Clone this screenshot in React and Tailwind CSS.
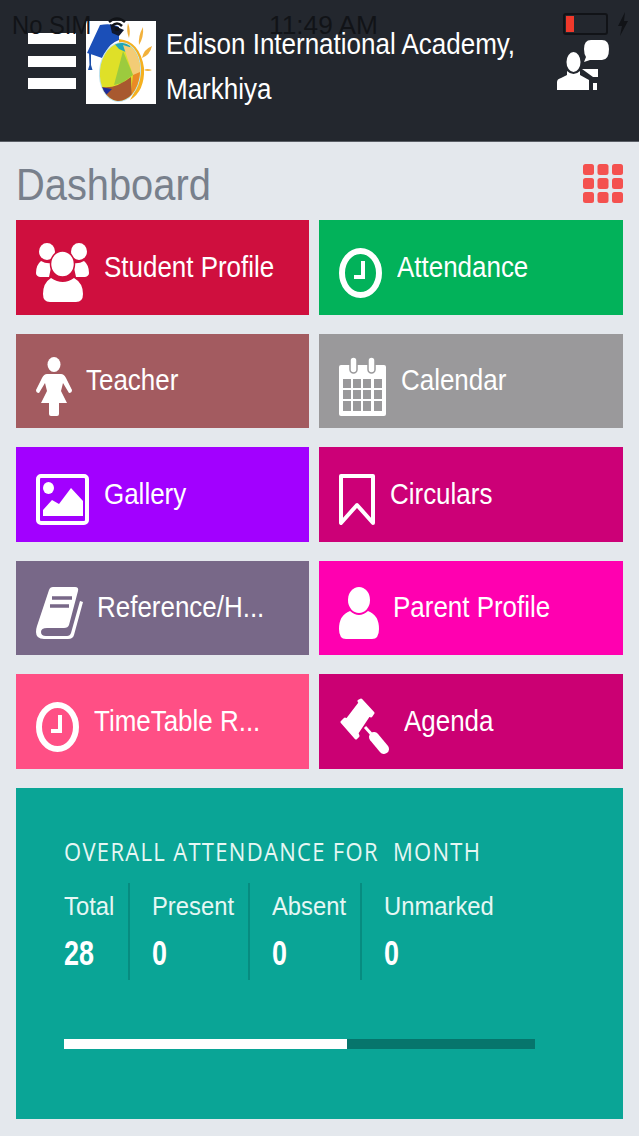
import React from 'react';

const UserGroupIcon = () => (
    <svg width="53" height="59" viewBox="0 0 53 59" fill="white">
        <ellipse cx="11" cy="8.5" rx="8" ry="8.5" />
        <ellipse cx="43" cy="8.5" rx="8" ry="8.5" />
        <path d="M5 18 Q0 22 0 30 Q0 33 4 34 H13 L16 20 Q10 21 5 18 Z" />
        <path d="M48 18 Q53 22 53 30 Q53 33 49 34 H40 L37 20 Q43 21 48 18 Z" />
        <ellipse cx="26.5" cy="21" rx="12" ry="13" stroke="#cf0f3e" strokeWidth="1.5" />
        <path d="M15 35 Q7 40 7 51 Q7 59 14 59 H40 Q47 59 47 51 Q47 40 38 35 Q27 43 15 35 Z" />
    </svg>
);

const ClockIcon = ({ stroke }) => (
    <svg width="43" height="50" viewBox="0 0 43 50" fill="none" stroke={stroke}>
        <ellipse cx="21.5" cy="25" rx="18.5" ry="22" strokeWidth="6" />
        <path d="M24 13 V29 H15" strokeWidth="4" />
    </svg>
);

const TeacherIcon = () => (
    <svg width="36" height="59" viewBox="0 0 36 59" fill="white">
        <ellipse cx="18" cy="7.5" rx="6.5" ry="7.5" />
        <path d="M11 17 H25 Q28 17 30 21 L36 33 Q36 36 33 36 L27 26 L25 34 L31 46 H23 V57 Q23 59 21 59 H15 Q13 59 13 57 V46 H5 L11 34 L9 26 L3 36 Q0 36 0 33 L6 21 Q8 17 11 17 Z" />
    </svg>
);

const CalendarIcon = () => (
    <svg width="47" height="59" viewBox="0 0 47 59" fill="white">
        <path d="M2 8 H45 Q47 8 47 10 V57 Q47 59 45 59 H2 Q0 59 0 57 V10 Q0 8 2 8 Z" />
        <rect x="11" y="0" width="7" height="16" rx="3.5" stroke="#9a999b" strokeWidth="1.5" />
        <rect x="29" y="0" width="7" height="16" rx="3.5" stroke="#9a999b" strokeWidth="1.5" />
        <g fill="#9a999b">
            <rect x="4" y="22" width="8" height="9" /><rect x="14" y="22" width="8" height="9" /><rect x="24" y="22" width="8" height="9" /><rect x="35" y="22" width="8" height="9" />
            <rect x="4" y="33" width="8" height="9" /><rect x="14" y="33" width="8" height="9" /><rect x="24" y="33" width="8" height="9" /><rect x="35" y="33" width="8" height="9" />
            <rect x="4" y="44" width="8" height="10" /><rect x="14" y="44" width="8" height="10" /><rect x="24" y="44" width="8" height="10" /><rect x="35" y="44" width="8" height="10" />
        </g>
    </svg>
);

const GalleryIcon = () => (
    <svg width="53" height="51" viewBox="0 0 53 51" fill="none">
        <rect x="2" y="2" width="49" height="47" rx="3" stroke="white" strokeWidth="4" />
        <ellipse cx="12.5" cy="14" rx="5.5" ry="6" fill="white" />
        <path d="M7 42 V36 L16 26 L23 30 L35 14 L47 27 V42 Z" fill="white" />
    </svg>
);

const BookmarkIcon = () => (
    <svg width="36" height="51" viewBox="0 0 36 51" fill="none" stroke="white" strokeWidth="4" strokeLinejoin="round">
        <path d="M2 2 H34 V49 L18 31 L2 49 Z" />
    </svg>
);

const BookIcon = () => (
    <svg width="47" height="52" viewBox="0 0 47 52">
        <path d="M13 3 Q14 0 17 0 H39 Q43 0 42 4 L33 38 Q32 41 28 41 H11 Q5 41 5 45 Q5 49 10 49 H31 Q34 49 35 46 L44 14 L47 15 L38 48 Q37 52 32 52 H8 Q0 52 0 45 Q0 42 1 39 Z" fill="white" />
        <path d="M16 11 H36 M14 19 H33" stroke="#786888" strokeWidth="3.5" />
    </svg>
);

const ParentIcon = () => (
    <svg width="40" height="52" viewBox="0 0 40 52" fill="white">
        <ellipse cx="20" cy="13" rx="11" ry="13" />
        <path d="M11 24 Q0 28 0 42 Q0 52 7 52 H33 Q40 52 40 42 Q40 28 29 24 Q20 32 11 24 Z" />
    </svg>
);

const GavelIcon = () => (
    <svg width="50" height="57" viewBox="0 0 50 57" fill="white">
        <path d="M2 24 L5 21 L7 22 L20 5 L19 3 L21 2 L33 15 L31 18 L29 17 L17 35 L18 38 L16 40 Z" stroke="white" strokeWidth="3" strokeLinejoin="round" />
        <path d="M25 29 L34 39" stroke="white" strokeWidth="3" />
        <path d="M34 39 L44 51" stroke="white" strokeWidth="10" strokeLinecap="round" />
    </svg>
);

const tiles = [
    { label: 'Student Profile', bg: 'bg-[#cf0f3e]', gap: 'gap-[15px]', icon: <UserGroupIcon />, pad: 'pl-[20px]' },
    { label: 'Attendance', bg: 'bg-[#02b25a]', gap: 'gap-[15px]', icon: <ClockIcon stroke="white" />, pad: 'pl-[20px]' },
    { label: 'Teacher', bg: 'bg-[#a35b60]', gap: 'gap-[14px]', icon: <TeacherIcon />, pad: 'pl-[20px]' },
    { label: 'Calendar', bg: 'bg-[#9a999b]', gap: 'gap-[15px]', icon: <CalendarIcon />, pad: 'pl-[20px]' },
    { label: 'Gallery', bg: 'bg-[#a200ff]', gap: 'gap-[15px]', icon: <GalleryIcon />, pad: 'pl-[20px]' },
    { label: 'Circulars', bg: 'bg-[#cc0077]', gap: 'gap-[15px]', icon: <BookmarkIcon />, pad: 'pl-[20px]' },
    { label: 'Reference/H...', bg: 'bg-[#786888]', gap: 'gap-[14px]', icon: <BookIcon />, pad: 'pl-[20px]' },
    { label: 'Parent Profile', bg: 'bg-[#ff00b0]', gap: 'gap-[14px]', icon: <ParentIcon />, pad: 'pl-[20px]' },
    { label: 'TimeTable R...', bg: 'bg-[#ff4f85]', gap: 'gap-[15px]', icon: <ClockIcon stroke="white" />, pad: 'pl-[20px]' },
    { label: 'Agenda', bg: 'bg-[#cb0073]', gap: 'gap-[14px]', icon: <GavelIcon />, pad: 'pl-[21px]' },
];

const stats = [
    { label: 'Total', value: '28', width: 'w-[66px]' },
    { label: 'Present', value: '0', width: 'w-[120px]' },
    { label: 'Absent', value: '0', width: 'w-[112px]' },
    { label: 'Unmarked', value: '0', width: 'w-[130px]' },
];

const Tile = ({ label, bg, gap, icon, pad }) => (
    <div className={`h-[94.5px] flex items-center ${bg} ${gap} ${pad}`}>
        <div className="shrink-0 flex mt-[11px]">{icon}</div>
        <span className="-mt-[2px] text-[30px] text-white whitespace-nowrap origin-left scale-x-[.865]">{label}</span>
    </div>
);

const Logo = () => (
    <svg width="70" height="83" viewBox="0 0 70 83" className="shrink-0">
        <defs>
            <clipPath id="egg"><ellipse cx="34" cy="51" rx="20" ry="29" transform="rotate(5 34 51)" /></clipPath>
        </defs>
        <rect width="70" height="83" fill="white" />
        <path d="M42 2 Q40 10 43 17 Q45 10 42 2 Z M57 6 Q52 15 53 24 Q58 16 57 6 Z M66 25 Q58 28 56 37 Q64 34 66 25 Z M66 49 Q61 47 58 49 Q62 51 66 49 Z" fill="#f2b13c" />
        <path d="M33 18 Q54 20 58 47 Q59 70 44 79 Q53 66 52 46 Q48 26 33 22 Z" fill="#f5b01f" />
        <path d="M3 32 L5 32 L5 44 L6.5 49 L2 49 L3.5 44 Z" fill="#1b4ea8" />
        <path d="M1 32 L14 4 Q26 2 33 6 L33 19 Q24 22 19 32 L16 37 Q8 34 1 32 Z" fill="#1b4fb8" />
        <path d="M24 3 L38 9 L33 15 L26 12 Z" fill="#10182e" />
        <ellipse cx="34" cy="51" rx="21" ry="30" fill="#bfe2ee" transform="rotate(5 34 51)" />
        <g clipPath="url(#egg)">
            <rect x="10" y="18" width="50" height="66" fill="#dfe028" />
            <path d="M26 20 H46 L42 32 L33 28 Z" fill="#1fa6b8" />
            <path d="M37 24 L56 30 V54 L47 54 Z" fill="#f3cc76" />
            <path d="M37 30 L47 54 L36 62 L28 64 Z" fill="#9ccb3e" />
            <path d="M47 54 L56 50 V80 L44 80 Z" fill="#ea8a25" />
            <path d="M16 66 Q30 68 45 56 L46 84 H16 Z" fill="#a8592f" />
            <path d="M14 66 L26 68 L20 74 Z" fill="#1e2c9a" />
        </g>
    </svg>
);

const PersonChatIcon = () => (
    <svg width="52" height="50" viewBox="0 0 52 50" fill="white">
        <ellipse cx="16.5" cy="22" rx="7" ry="10" />
        <path d="M10 31 Q13 34 16.5 34 Q20 34 23 31 V35 L32 40 V50 H0 V42 Q0 39 4 38 L10 35 Z" />
        <path d="M34 0 H45 Q52 0 52 9 Q52 20 45 20 H33 L27 22 L29 17 Q27 14 27 9 Q27 0 34 0 Z" />
        <path d="M25 29 H41 V37 H36 Z" />
        <rect x="36" y="43" width="4" height="7" />
    </svg>
);

const GridIcon = () => (
    <svg width="40" height="39" viewBox="0 0 40 39" fill="#f4514f">
        <rect x="0" y="0" width="11" height="11" rx="2.5" /><rect x="14.5" y="0" width="11" height="11" rx="2.5" /><rect x="29" y="0" width="11" height="11" rx="2.5" />
        <rect x="0" y="14" width="11" height="11" rx="2.5" /><rect x="14.5" y="14" width="11" height="11" rx="2.5" /><rect x="29" y="14" width="11" height="11" rx="2.5" />
        <rect x="0" y="28" width="11" height="11" rx="2.5" /><rect x="14.5" y="28" width="11" height="11" rx="2.5" /><rect x="29" y="28" width="11" height="11" rx="2.5" />
    </svg>
);

const StatusBar = () => (
    <div className="absolute inset-x-0 top-0 h-[40px] text-[#111317]">
        <span className="absolute left-[12px] top-[10px] text-[25px] leading-[30px] whitespace-nowrap origin-left scale-x-[.95]">No SIM</span>
        <svg width="18" height="14" viewBox="0 0 18 14" fill="none" stroke="currentColor" strokeWidth="2.5" className="absolute left-[108px] top-[17px]">
            <path d="M1 5 Q9 -2 17 5 M4 9 Q9 4 14 9" />
            <circle cx="9" cy="12" r="1" />
        </svg>
        <span className="absolute left-[269px] top-[10px] text-[25px] leading-[30px] whitespace-nowrap origin-left scale-x-[1.05]">11:49 AM</span>
        <div className="absolute left-[563px] top-[13px] w-[45px] h-[22px] rounded-[3px] border-2 border-current p-[1px]">
            <div className="w-[8px] h-full bg-[#f0392b]" />
        </div>
        <svg width="12" height="24" viewBox="0 0 12 24" fill="currentColor" className="absolute left-[617px] top-[12px]">
            <path d="M8 0 L1 14 H5 L3 24 L11 9 H7 Z" />
        </svg>
    </div>
);

const App = () => {
    return (
        <div className="relative w-[639px] h-[1136px] overflow-hidden bg-[#e4e8ed] font-['Liberation_Sans',Arial,sans-serif]">
            <header className="h-[142px] bg-[#23272e] flex items-start pl-[28px] pr-[30px] pt-[21px] border-b border-[#5a5e66]">
                <div className="w-[48px] pt-[12px] flex flex-col gap-[11.5px] shrink-0">
                    <div className="h-[11px] bg-white" />
                    <div className="h-[11px] bg-white" />
                    <div className="h-[11px] bg-white" />
                </div>
                <div className="ml-[10px]"><Logo /></div>
                <div className="ml-[10px] pt-[1px] text-[29px] leading-[45px] text-white whitespace-nowrap origin-left scale-x-[.896] flex-1">
                    <div>Edison International Academy,</div>
                    <div>Markhiya</div>
                </div>
                <div className="pt-[19px] shrink-0"><PersonChatIcon /></div>
            </header>
            <StatusBar />
            <main className="pl-[16px] pr-[16px]">
                <div className="h-[78px] flex items-center justify-between pt-[9px]">
                    <h1 className="-mt-[2px] text-[44px] text-[#78808c] origin-left scale-x-[.905] whitespace-nowrap leading-none">Dashboard</h1>
                    <div className="flex -mt-[4px]"><GridIcon /></div>
                </div>
                <div className="grid grid-cols-[293px_304px] gap-x-[10px] gap-y-[19px]">
                    {tiles.map((t) => <Tile key={t.label} {...t} />)}
                </div>
                <section className="mt-[19px] h-[331px] bg-[#0aa596] pl-[48px] pt-[49px]">
                    <h2 className="font-['Open_Sans',sans-serif] font-medium text-[25px] leading-[28px] tracking-[1.5px] text-[#e6f7f4] whitespace-nowrap origin-left scale-x-[.88]">OVERALL ATTENDANCE FOR&nbsp; MONTH</h2>
                    <div className="flex mt-[18px] h-[97px]">
                        {stats.map((s, i) => (
                            <div key={s.label} className={`${s.width} ${i > 0 ? 'pl-[22px]' : ''} ${i < 3 ? 'border-r-2 border-[#078c80]' : ''}`}>
                                <div className="mt-[8px] text-[26px] leading-[30px] text-[#e6f7f4] whitespace-nowrap origin-left scale-x-[.915]">{s.label}</div>
                                <div className="mt-[12px] text-[35px] leading-[40px] font-bold text-white origin-left scale-x-[.77]">{s.value}</div>
                            </div>
                        ))}
                    </div>
                    <div className="mt-[59px] w-[471px] h-[10px] bg-[#06756c]">
                        <div className="w-[283px] h-full bg-white" />
                    </div>
                </section>
            </main>
        </div>
    );
};

export default App;
